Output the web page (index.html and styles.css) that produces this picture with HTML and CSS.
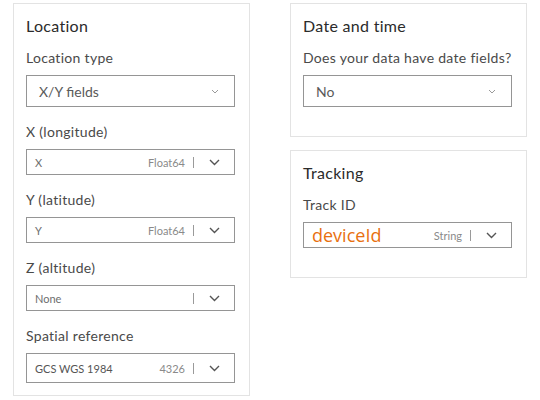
FILE: index.html
```html
<!DOCTYPE html>
<html>
<head>
<meta charset="utf-8">
<link rel="stylesheet" href="styles.css">
</head>
<body>
<div class="page">
  <section class="card card-left">
    <h2 class="title">Location</h2>
    <div class="field">
      <div class="label">Location type</div>
      <div class="select select-lg"><span class="val">X/Y fields</span><svg class="chev-sm" width="8" height="5" viewBox="0 0 8 5"><path d="M1 1l3 3 3-3" fill="none" stroke="#9a9a9a" stroke-width="1"/></svg></div>
    </div>
    <div class="field">
      <div class="label">X (longitude)</div>
      <div class="select select-sm"><span class="val-sm">X</span><span class="type">Float64</span><span class="div"></span><svg class="chev" width="11" height="7" viewBox="0 0 11 7"><path d="M1 1l4.5 4.5L10 1" fill="none" stroke="#555" stroke-width="1.4"/></svg></div>
    </div>
    <div class="field">
      <div class="label">Y (latitude)</div>
      <div class="select select-sm"><span class="val-sm">Y</span><span class="type">Float64</span><span class="div"></span><svg class="chev" width="11" height="7" viewBox="0 0 11 7"><path d="M1 1l4.5 4.5L10 1" fill="none" stroke="#555" stroke-width="1.4"/></svg></div>
    </div>
    <div class="field">
      <div class="label">Z (altitude)</div>
      <div class="select select-sm"><span class="val-sm">None</span><span class="type"></span><span class="div"></span><svg class="chev" width="11" height="7" viewBox="0 0 11 7"><path d="M1 1l4.5 4.5L10 1" fill="none" stroke="#555" stroke-width="1.4"/></svg></div>
    </div>
    <div class="field">
      <div class="label">Spatial reference</div>
      <div class="select select-md"><span class="val-sm dark">GCS WGS 1984</span><span class="type">4326</span><span class="div"></span><svg class="chev" width="11" height="7" viewBox="0 0 11 7"><path d="M1 1l4.5 4.5L10 1" fill="none" stroke="#555" stroke-width="1.4"/></svg></div>
    </div>
  </section>
  <div class="col">
    <section class="card card-right">
      <h2 class="title">Date and time</h2>
      <div class="field">
        <div class="label">Does your data have date fields?</div>
        <div class="select select-lg"><span class="val">No</span><svg class="chev-sm" width="8" height="5" viewBox="0 0 8 5"><path d="M1 1l3 3 3-3" fill="none" stroke="#9a9a9a" stroke-width="1"/></svg></div>
      </div>
    </section>
    <section class="card card-right">
      <h2 class="title">Tracking</h2>
      <div class="field">
        <div class="label">Track ID</div>
        <div class="select select-sm"><span class="val-orange">deviceId</span><span class="type">String</span><span class="div"></span><svg class="chev" width="11" height="7" viewBox="0 0 11 7"><path d="M1 1l4.5 4.5L10 1" fill="none" stroke="#555" stroke-width="1.4"/></svg></div>
      </div>
    </section>
  </div>
</div>
</body>
</html>
```
FILE: styles.css
```css
html, body {
  margin: 0;
  padding: 0;
  background: #fff;
}
body {
  font-family: "Lato", "Open Sans", sans-serif;
  color: #323232;
}
.page {
  display: flex;
  align-items: flex-start;
  gap: 40px;
  padding: 3px 0 0 13px;
}
.card {
  box-sizing: border-box;
  width: 237px;
  border: 1px solid #e3e3e3;
  background: #fff;
  padding: 11px 14px 12px 12px;
}
.card-left {
  height: 393px;
}
.card-right {
  padding-bottom: 29px;
}
.col {
  display: flex;
  flex-direction: column;
  gap: 13px;
}
.title {
  margin: 0;
  font-size: 16px;
  font-weight: 400;
  line-height: 22px;
  letter-spacing: 0.3px;
  color: #2b2b2b;
}
.field {
  margin-top: 11px;
}
.field + .field {
  margin-top: 15px;
}
.label {
  font-size: 14px;
  line-height: 20px;
  letter-spacing: 0.3px;
  color: #4a4a4a;
  margin-bottom: 7px;
}
.select {
  box-sizing: border-box;
  display: flex;
  align-items: center;
  border: 1px solid #959595;
  background: #fff;
}
.select-lg {
  height: 32px;
  padding: 0 15px 0 12px;
}
.select-sm {
  height: 26px;
  padding: 0 14px 0 8px;
}
.select-md {
  height: 30px;
  padding: 0 14px 0 8px;
}
.val {
  flex: 1;
  font-size: 14px;
  color: #5a5a5a;
}
.val-sm {
  flex: 1;
  font-size: 11px;
  color: #6e6e6e;
}
.val-sm.dark {
  color: #555;
}
.val-orange {
  flex: 1;
  font-family: "Open Sans", sans-serif;
  font-size: 18px;
  color: #e8700f;
  line-height: 24px;
}
.type {
  font-size: 11px;
  color: #8a8a8a;
}
.div {
  width: 1px;
  height: 11px;
  background: #9a9a9a;
  margin: 0 15px 0 8px;
}
.chev-sm {
  display: block;
}
.chev {
  display: block;
}
```
